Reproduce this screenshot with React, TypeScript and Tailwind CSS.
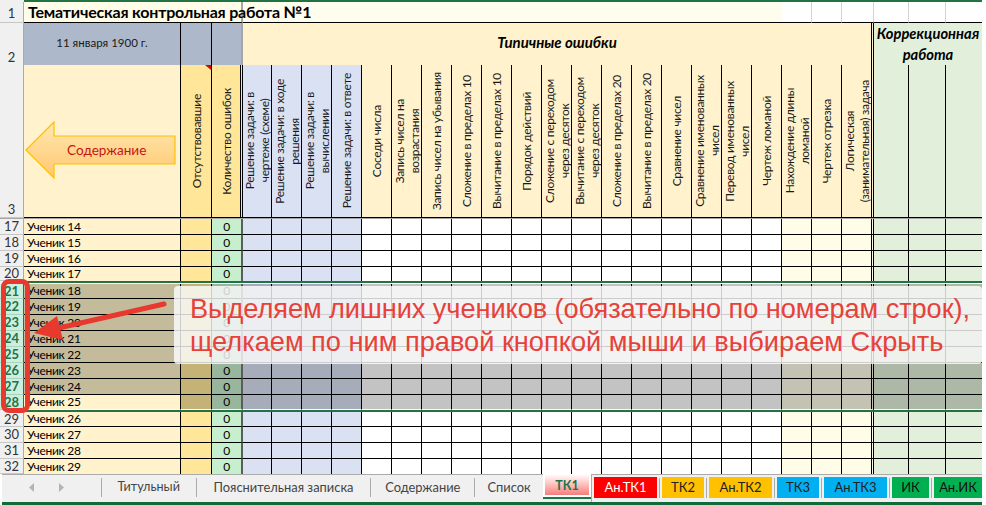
const GRID =
  "grid w-[982px] grid-cols-[24px_157px_31px_31px_29px_30px_30px_30px_repeat(16,30px)_32px_35px_37px_36px]";

const normalCols = [
  "bg-[#fff2cc]",
  "bg-[#ffe699]",
  "bg-[#c6efce] text-[#006100]",
  ...Array(4).fill("bg-[#d9e1f2]"),
  ...Array(14).fill("bg-white"),
  ...Array(3).fill("bg-[#fffce8]"),
  ...Array(3).fill("bg-[#e2efda]"),
];

const selectedCols = [
  "bg-[#c4bb9b]",
  "bg-[#c4b276]",
  "bg-[#98b69e] text-[#0a3d0a]",
  ...Array(4).fill("bg-[#a6acba]"),
  ...Array(14).fill("bg-[#c3c3c3]"),
  ...Array(3).fill("bg-[#c4c2b2]"),
  ...Array(3).fill("bg-[#adb8a7]"),
];

const errorHeads = [
  "Соседи числа",
  "Запись чисел на\nвозрастания",
  "Запись чисел на убывания",
  "Сложение в пределах 10",
  "Вычитание в пределах 10",
  "Порядок действий",
  "Сложение с переходом\nчерез десяток",
  "Вычитание с переходом\nчерез десяток",
  "Сложение в пределах 20",
  "Вычитание в пределах 20",
  "Сравнение чисел",
  "Сравнение именованных\nчисел",
  "Перевод именованных\nчисел",
  "Чертеж ломаной",
  "Нахождение длины\nломаной",
  "Чертеж отрезка",
  "Логическая\n(занимательная) задача",
];

const taskHeads = [
  "Решение задачи: в\nчертеже (схеме)",
  "Решение задачи: в ходе\nрешения",
  "Решение задачи: в\nвычислении",
  "Решение задачи: в ответе",
];

function rightBorder(i: number) {
  if (i === 2) return "border-r-2 border-r-[#5c5c5c]";
  if (i === 23) return "border-r-[3px] border-double border-r-black";
  if (i === 26) return "";
  return "border-r border-r-black";
}

function RowNum({ n, selected, tall }: { n: number; selected?: boolean; tall?: boolean }) {
  return (
    <div
      className={`flex justify-center border-r border-b text-[13px] leading-none ${
        tall ? "items-end pb-[1px]" : "items-center"
      } ${
        selected
          ? "border-r-[#217346] border-b-[#a9d3bd] bg-[#cdeedd] font-bold text-[#217346]"
          : "border-r-[#ababab] border-b-[#c6c6c6] bg-[#f0f0f0] text-[#333]"
      }`}
    >
      {n}
    </div>
  );
}

function VHead({ text, className }: { text: string; className: string }) {
  return (
    <div className={`flex items-center justify-center border-b border-b-black ${className}`}>
      <span className="rotate-180 whitespace-pre text-center text-[12px] leading-[15px] tracking-[-0.3px] text-[#1a1a1a] [writing-mode:vertical-rl]">
        {text}
      </span>
    </div>
  );
}

function StudentRow({
  rowNo,
  heightClass,
  selected,
  activeName,
  bottomClass = "border-b border-b-black",
}: {
  rowNo: number;
  heightClass: string;
  selected?: boolean;
  activeName?: boolean;
  bottomClass?: string;
}) {
  const cols = selected ? selectedCols : normalCols;
  return (
    <div className={`${GRID} ${heightClass}`}>
      <RowNum n={rowNo} selected={selected} />
      {cols.map((bg, i) => (
        <div
          key={i}
          className={`flex items-center overflow-hidden text-[12px] leading-none tracking-[-0.3px] text-black ${
            i === 0 && activeName ? "bg-[#fff2cc]" : bg
          } ${rightBorder(i)} ${bottomClass} ${i === 0 ? "pl-[3px]" : "justify-center"}`}
        >
          {i === 0 ? `Ученик ${rowNo - 3}` : i === 2 ? "0" : ""}
        </div>
      ))}
    </div>
  );
}

function GreenLine({ whiteBelow }: { whiteBelow?: boolean }) {
  return (
    <div className={`flex w-[982px] ${whiteBelow ? "h-[3px]" : "h-[2px]"}`}>
      <div className="w-[24px] bg-[#f0f0f0]" />
      <div className={`flex-1 bg-[#217346] ${whiteBelow ? "border-b border-b-white" : ""}`} />
    </div>
  );
}

function Sheet() {
  return (
    <div className="flex flex-col">
      <GreenLine />
      {/* row 1 */}
      <div className={`${GRID} h-[21px]`}>
        <div className="flex items-center justify-center border-r border-b border-r-[#ababab] border-b-[#c6c6c6] bg-[#f0f0f0] pt-[2px] text-[13px] leading-none text-[#333]">
          1
        </div>
        <div className="col-span-3 flex items-center border-r-2 border-b border-r-[#a6a6a6] border-b-black bg-[#fffce8] pl-[4px]">
          <span className="relative z-10 whitespace-nowrap text-[16px] font-bold leading-none tracking-[-0.2px] text-black">
            Тематическая контрольная работа №1
          </span>
        </div>
        <div className="col-span-18 border-b border-b-black bg-[#fffdee]" />
        <div className="border-r border-b border-r-[#d4d4d4] border-b-black" />
        <div className="border-r border-b border-r-[#d4d4d4] border-b-black" />
        <div className="border-r border-b border-r-[#d4d4d4] border-b-black" />
        <div className="border-r border-b border-r-[#d4d4d4] border-b-black" />
        <div className="border-r border-b border-r-[#d4d4d4] border-b-black" />
        <div className="border-b border-b-black" />
      </div>

      {/* row 2 */}
      <div className={`${GRID} h-[42px]`}>
        <RowNum n={2} tall />
        <div className="flex items-center justify-center border-r border-b border-black bg-[#adb9ca] pb-[3px] text-[11.5px] text-[#1a1a1a]">
          11 января 1900 г.
        </div>
        <div className="border-r border-b border-black bg-[#adb9ca]" />
        <div className="border-r-2 border-b border-r-[#a6a6a6] border-b-black bg-[#adb9ca]" />
        <div className="col-span-21 flex items-center justify-center border-r-[3px] border-b border-double border-r-black border-b-black bg-[#fff2cc] pb-[3px] text-[15px] font-bold italic text-black">
          Типичные ошибки
        </div>
        <div className="col-span-3 flex items-center justify-center whitespace-pre-line border-b border-b-black bg-[#e2efda] text-center text-[14.7px] font-bold italic leading-[21px] text-black">
          {"Коррекционная\nработа"}
        </div>
      </div>

      {/* row 3 */}
      <div className={`${GRID} h-[153px]`}>
        <RowNum n={3} tall />
        <div className="relative border-r border-b border-black bg-[#fff2cc]">
          <svg className="absolute left-[1px] top-[56px]" width="152" height="58" viewBox="0 0 152 58">
            <defs>
              <linearGradient id="arrowFill" x1="0" y1="0" x2="0" y2="1">
                <stop offset="0" stopColor="#ffe7b0" />
                <stop offset="1" stopColor="#ffc870" />
              </linearGradient>
            </defs>
            <path
              d="M1 29 L29 1 V15 H150 V43 H29 V57 Z"
              fill="url(#arrowFill)"
              stroke="#ffc000"
              strokeWidth="1.2"
            />
          </svg>
          <span className="absolute left-[43px] top-[76px] text-[13.6px] leading-[18px] text-[#c81414]">Содержание</span>
        </div>
        <div className="relative">
          <VHead text="Отсутствовавшие" className="h-full border-r border-r-black bg-[#ffe699]" />
          <div className="absolute right-[1px] top-0 h-[5px] w-[6px] bg-[#e00000] [clip-path:polygon(0_0,100%_0,100%_100%)]" />
        </div>
        <VHead text="Количество ошибок" className="border-r-[3px] border-double border-r-black bg-[#ffe699]" />
        {taskHeads.map((t) => (
          <VHead key={t} text={t} className="border-r border-r-black bg-[#d9e1f2]" />
        ))}
        {errorHeads.map((t, i) => (
          <VHead
            key={t}
            text={t}
            className={`bg-[#fff2cc] ${
              i === errorHeads.length - 1 ? "border-r-[3px] border-double border-r-black" : "border-r border-r-black"
            }`}
          />
        ))}
        <div className="border-r border-b border-black bg-[#e2efda]" />
        <div className="border-r border-b border-black bg-[#e2efda]" />
        <div className="border-b border-b-black bg-[#e2efda]" />
      </div>
      <div className="h-px w-[982px] bg-[#a6a6a6]" />

      {[17, 18, 19].map((n) => (
        <StudentRow key={n} rowNo={n} heightClass="h-[16px]" />
      ))}
      <StudentRow rowNo={20} heightClass="h-[14px]" bottomClass="" />
      <GreenLine whiteBelow />
      <StudentRow rowNo={21} heightClass="h-[15px]" selected />
      {[22, 23, 24, 25, 26, 27].map((n) => (
        <StudentRow key={n} rowNo={n} heightClass="h-[16px]" selected />
      ))}
      <StudentRow rowNo={28} heightClass="h-[15px]" selected activeName bottomClass="border-b border-b-white" />
      <GreenLine />
      <StudentRow rowNo={29} heightClass="h-[15px]" />
      <StudentRow rowNo={30} heightClass="h-[16px]" />
      <StudentRow rowNo={31} heightClass="h-[16px]" />
      <StudentRow rowNo={32} heightClass="h-[15px]" bottomClass="" />
    </div>
  );
}

function Sep() {
  return <div className="mx-[2px] mt-[1px] h-[20px] w-px shrink-0 bg-[#ababab]" />;
}

function Tabs() {
  return (
    <div className="ml-[2px] flex h-[28px] w-[980px] border-t border-t-[#ababab] bg-[#f0f0f0]">
      <div className="mt-[3px] flex h-[19px] w-[100px] items-center border-r border-r-[#ababab]">
        <svg className="ml-[27px]" width="6" height="9" viewBox="0 0 6 9">
          <path d="M5 0 V9 L0 4.5 Z" fill="#b4b4b4" />
        </svg>
        <svg className="ml-[23px]" width="6" height="9" viewBox="0 0 6 9">
          <path d="M1 0 V9 L6 4.5 Z" fill="#b4b4b4" />
        </svg>
      </div>
      <div className="mt-[3px] flex h-[19px] w-[95px] items-center justify-center border-r border-r-[#ababab] text-[12.6px] text-[#444]">
        Титульный
      </div>
      <div className="mt-[3px] flex h-[19px] w-[175px] items-center justify-center border-r border-r-[#ababab] text-[12.9px] text-[#444]">
        Пояснительная записка
      </div>
      <div className="mt-[3px] flex h-[19px] w-[104px] items-center justify-center border-r border-r-[#ababab] text-[12.9px] text-[#444]">
        Содержание
      </div>
      <div className="mt-[3px] flex h-[19px] w-[68px] items-center justify-center text-[12.9px] text-[#444]">
        Список
      </div>
      <div className="-mt-px flex h-[25px] w-[48px] flex-col border-b-2 border-b-[#217346] bg-white px-[2px] pb-[2px]">
        <div className="flex flex-1 items-center justify-center bg-gradient-to-b from-white to-[#f47c7c] pt-[3px] text-[12.5px] font-bold leading-none text-[#217346]">
          ТК1
        </div>
      </div>
      <div className="flex flex-1 border-l border-l-[#ababab] pt-[2px] pl-[2px]">
        <div className="flex h-[21px] w-[63px] shrink-0 items-center justify-center bg-[#ff0000] text-[13px] text-white">
          Ан.ТК1
        </div>
        <Sep />
        <div className="flex h-[21px] w-[42px] shrink-0 items-center justify-center bg-[#ffc000] text-[13px] text-[#222]">
          ТК2
        </div>
        <Sep />
        <div className="flex h-[21px] w-[63px] shrink-0 items-center justify-center bg-[#ffc000] text-[13px] text-[#222]">
          Ан.ТК2
        </div>
        <Sep />
        <div className="flex h-[21px] w-[42px] shrink-0 items-center justify-center bg-[#00b0f0] text-[13px] text-[#222]">
          ТК3
        </div>
        <Sep />
        <div className="flex h-[21px] w-[63px] shrink-0 items-center justify-center bg-[#00b0f0] text-[13px] text-[#222]">
          Ан.ТК3
        </div>
        <Sep />
        <div className="flex h-[21px] w-[37px] shrink-0 items-center justify-center bg-[#00b050] text-[13px] text-[#111]">
          ИК
        </div>
        <Sep />
        <div className="flex h-[21px] w-[48px] shrink-0 items-center justify-center bg-[#00b050] text-[13px] text-[#111]">
          Ан.ИК
        </div>
      </div>
    </div>
  );
}

export default function App() {
  return (
    <div className="relative h-[505px] w-[986px] overflow-hidden bg-white font-['Lato','Noto_Sans',sans-serif]">
      <Sheet />
      <Tabs />
      <div className="ml-[2px] h-[3px] w-[980px] bg-[#0f6b3a]" />

      {/* callout on top of the sheet */}
      <div className="absolute left-[174px] top-[286px] flex h-[78px] w-[808px] flex-col justify-center rounded-[4px] bg-white/80 pl-[16px] font-['Liberation_Sans',sans-serif] text-[27.2px] leading-[33px] text-[#e8413a]">
        <div className="whitespace-nowrap tracking-[-0.07px]">Выделяем лишних учеников (обязательно по номерам строк),</div>
        <div className="whitespace-nowrap">щелкаем по ним правой кнопкой мыши и выбираем Скрыть</div>
      </div>
      <div className="absolute left-[1px] top-[279px] h-[134px] w-[29px] rounded-[8px] border-[5px] border-[#e8392f]" />
      <svg className="absolute left-0 top-0" width="986" height="505" viewBox="0 0 986 505">
        <path d="M164 304 L50 330" stroke="#e8392f" strokeWidth="5" strokeLinecap="round" />
        <path d="M34 333 L57 316 L63 340 Z" fill="#e8392f" />
      </svg>
    </div>
  );
}
